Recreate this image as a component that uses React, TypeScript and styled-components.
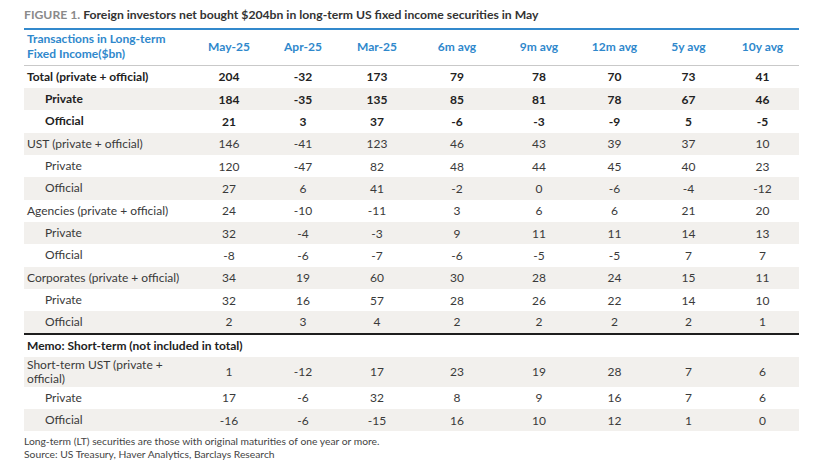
import React from "react";
import styled, { createGlobalStyle } from "styled-components";

const Global = createGlobalStyle`
  html, body { margin: 0; padding: 0; background: #ffffff; }
  body { font-family: "Lato", "Liberation Sans", sans-serif; color: #333; }
`;

const Page = styled.div`
  width: 832px;
  height: 466px;
  padding: 7px 0 0 24px;
  box-sizing: border-box;
`;

const Title = styled.div`
  font-size: 12.2px;
  font-weight: 700;
  line-height: 16px;
  color: #333;
  white-space: nowrap;
`;

const FigLabel = styled.span`
  color: #8a8a8a;
`;

const Table = styled.table`
  margin-top: 5px;
  width: 775px;
  border-collapse: collapse;
  table-layout: fixed;
  border-top: 2px solid #3389cc;
  font-size: 12px;
`;

const HeadCell = styled.th<{ $left?: boolean }>`
  height: 32px;
  padding: 0 0 3px ${(p) => (p.$left ? "3px" : "0")};
  text-align: ${(p) => (p.$left ? "left" : "center")};
  color: #2f88cc;
  font-weight: 700;
  line-height: 15px;
  border-bottom: 1px solid #c9c9c9;
  vertical-align: middle;
`;

const Row = styled.tr<{ $shade?: boolean; $tall?: boolean; $rule?: boolean }>`
  height: ${(p) => (p.$tall ? "30px" : "22.35px")};
  background: ${(p) => (p.$shade ? "#f2f0ed" : "transparent")};
  border-bottom: ${(p) => (p.$rule ? "2px solid #1e1e1e" : "none")};
`;

const MemoRow = styled.tr`
  height: 23px;
`;

const Label = styled.td<{ $indent?: boolean; $bold?: boolean }>`
  padding: 0 0 0 ${(p) => (p.$indent ? "21px" : "3px")};
  text-align: left;
  font-weight: ${(p) => (p.$bold ? 700 : 400)};
  color: ${(p) => (p.$bold ? "#222" : "#3a3a3a")};
  line-height: 14px;
  white-space: nowrap;
`;

const MemoLabel = styled.td`
  padding: 0 0 0 3px;
  font-weight: 700;
  color: #222;
  white-space: nowrap;
`;

const Num = styled.td<{ $bold?: boolean }>`
  padding: 0;
  text-align: center;
  font-weight: ${(p) => (p.$bold ? 700 : 400)};
  color: ${(p) => (p.$bold ? "#222" : "#3a3a3a")};
`;

const Notes = styled.div`
  margin-top: 4px;
  font-size: 10.3px;
  line-height: 13px;
  color: #444;
`;

const widths = [168, 74, 74, 74, 86, 78, 73, 75, 73];
const heads = ["May-25", "Apr-25", "Mar-25", "6m avg", "9m avg", "12m avg", "5y avg", "10y avg"];

type R = { label: string; indent?: boolean; bold?: boolean; vals: (number | string)[] };

const main: R[] = [
  { label: "Total (private + official)", bold: true, vals: [204, -32, 173, 79, 78, 70, 73, 41] },
  { label: "Private", indent: true, bold: true, vals: [184, -35, 135, 85, 81, 78, 67, 46] },
  { label: "Official", indent: true, bold: true, vals: [21, 3, 37, -6, -3, -9, 5, -5] },
  { label: "UST (private + official)", vals: [146, -41, 123, 46, 43, 39, 37, 10] },
  { label: "Private", indent: true, vals: [120, -47, 82, 48, 44, 45, 40, 23] },
  { label: "Official", indent: true, vals: [27, 6, 41, -2, 0, -6, -4, -12] },
  { label: "Agencies (private + official)", vals: [24, -10, -11, 3, 6, 6, 21, 20] },
  { label: "Private", indent: true, vals: [32, -4, -3, 9, 11, 11, 14, 13] },
  { label: "Official", indent: true, vals: [-8, -6, -7, -6, -5, -5, 7, 7] },
  { label: "Corporates (private + official)", vals: [34, 19, 60, 30, 28, 24, 15, 11] },
  { label: "Private", indent: true, vals: [32, 16, 57, 28, 26, 22, 14, 10] },
  { label: "Official", indent: true, vals: [2, 3, 4, 2, 2, 2, 2, 1] },
];

const memo: R[] = [
  { label: "Private", indent: true, vals: [17, -6, 32, 8, 9, 16, 7, 6] },
  { label: "Official", indent: true, vals: [-16, -6, -15, 16, 10, 12, 1, 0] },
];

const fmt = (v: number | string) => (typeof v === "number" && v < 0 ? `-${Math.abs(v)}` : String(v));

export default function App() {
  return (
    <Page>
      <Global />
      <Title>
        <FigLabel>FIGURE 1.</FigLabel> Foreign investors net bought $204bn in long-term US fixed income securities in May
      </Title>
      <Table>
        <colgroup>
          {widths.map((w, i) => (
            <col key={i} style={{ width: w }} />
          ))}
        </colgroup>
        <thead>
          <tr>
            <HeadCell $left>
              Transactions in Long-term
              <br />
              Fixed Income($bn)
            </HeadCell>
            {heads.map((h) => (
              <HeadCell key={h}>{h}</HeadCell>
            ))}
          </tr>
        </thead>
        <tbody>
          {main.map((r, i) => (
            <Row key={i} $shade={i % 2 === 1} $rule={i === main.length - 1}>
              <Label $indent={r.indent} $bold={r.bold}>{r.label}</Label>
              {r.vals.map((v, j) => (
                <Num key={j} $bold={r.bold}>{fmt(v)}</Num>
              ))}
            </Row>
          ))}
          <MemoRow>
            <MemoLabel colSpan={9}>Memo: Short-term (not included in total)</MemoLabel>
          </MemoRow>
          <Row $shade $tall>
            <Label>
              Short-term UST (private +
              <br />
              official)
            </Label>
            {[1, -12, 17, 23, 19, 28, 7, 6].map((v, j) => (
              <Num key={j}>{fmt(v)}</Num>
            ))}
          </Row>
          {memo.map((r, i) => (
            <Row key={i} $shade={i === 1}>
              <Label $indent={r.indent}>{r.label}</Label>
              {r.vals.map((v, j) => (
                <Num key={j}>{fmt(v)}</Num>
              ))}
            </Row>
          ))}
        </tbody>
      </Table>
      <Notes>
        Long-term (LT) securities are those with original maturities of one year or more.
        <br />
        Source: US Treasury, Haver Analytics, Barclays Research
      </Notes>
    </Page>
  );
}
